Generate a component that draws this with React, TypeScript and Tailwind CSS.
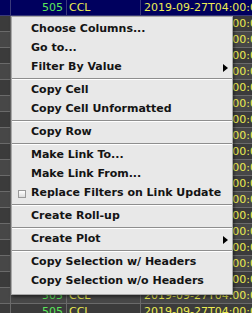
import React from 'react'

const font = { fontFamily: '"DejaVu Sans", "Liberation Sans", sans-serif' }

type Row = { navy?: boolean; dark?: boolean }

const rows: Row[] = Array.from({ length: 20 }, (_, i) => ({ navy: i === 0, dark: i % 2 === 1 }))

function TableRow({ navy, dark }: Row) {
  const bg = navy ? 'bg-[#00005e]' : dark ? 'bg-[#3b3b3b]' : 'bg-[#474747]'
  const line = navy ? 'border-[#3a3a7a]' : 'border-[#6a6a6a]'
  return (
    <div className={`flex h-[16px] shrink-0 border-b ${line} ${bg} text-[11px] leading-[15px] whitespace-nowrap`}>
      <div className={`w-[11px] shrink-0 border-r ${line}`} />
      <div className={`w-[56px] shrink-0 border-r ${line} pr-[3px] text-right text-[#5ae65a]`}>505</div>
      <div className={`w-[74px] shrink-0 border-r ${line} pl-[2px] text-[#ecec52]`}>CCL</div>
      <div className="pl-[3px] text-[#ecec52]">2019-09-27T04:00:00</div>
    </div>
  )
}

interface ItemProps {
  label: string
  sub?: boolean
  check?: boolean
}

function Item({ label, sub, check }: ItemProps) {
  return (
    <div className="flex h-[19px] items-center pl-[6px] pr-[4px]">
      <div className="flex w-[13px] shrink-0 items-center">
        {check && <div className="h-[8px] w-[8px] border border-[#9a9a9a] bg-gradient-to-b from-white to-[#dcdcdc]" />}
      </div>
      <span className="font-bold text-[11px] text-[#141414]">{label}</span>
      <div className="flex-1" />
      {sub && (
        <div className="h-0 w-0 border-y-[4px] border-l-[5px] border-y-transparent border-l-black" />
      )}
    </div>
  )
}

function Sep() {
  return (
    <div className="h-[4px] pt-[1px]">
      <div className="h-[1px] bg-[#8e8e8e]" />
      <div className="h-[1px] bg-white" />
    </div>
  )
}

export default function App() {
  return (
    <div className="relative h-[313px] w-[252px] overflow-hidden bg-[#3b3b3b]" style={font}>
      <div className="flex flex-col">
        {rows.map((r, i) => (
          <TableRow key={i} {...r} />
        ))}
      </div>
      <div className="absolute left-[11px] top-[16px] w-[222px] border border-[#a8a8a8] bg-[#e8e8e8] py-[3px] shadow-[1px_2px_3px_rgba(0,0,0,0.5)]">
        <Item label="Choose Columns..." />
        <Item label="Go to..." />
        <Item label="Filter By Value" sub />
        <Sep />
        <Item label="Copy Cell" />
        <Item label="Copy Cell Unformatted" />
        <Sep />
        <Item label="Copy Row" />
        <Sep />
        <Item label="Make Link To..." />
        <Item label="Make Link From..." />
        <Item label="Replace Filters on Link Update" check />
        <Sep />
        <Item label="Create Roll-up" />
        <Sep />
        <Item label="Create Plot" sub />
        <Sep />
        <Item label="Copy Selection w/ Headers" />
        <Item label="Copy Selection w/o Headers" />
      </div>
    </div>
  )
}
